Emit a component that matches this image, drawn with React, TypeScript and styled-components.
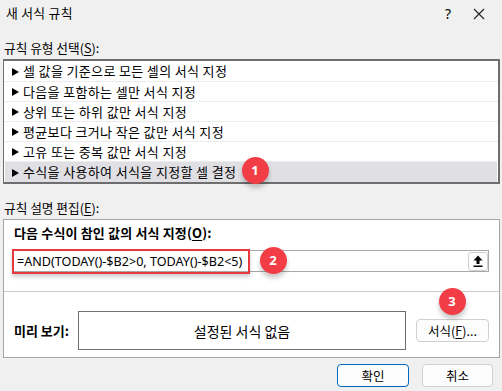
import React from "react";
import styled, { createGlobalStyle } from "styled-components";

const Global = createGlobalStyle`
  html, body { margin: 0; padding: 0; background: #f0f0f0; }
  body { font-family: "Noto Sans CJK KR", "Noto Sans", sans-serif; color: #000; }
`;

const KR = `"Noto Sans CJK KR", "Noto Sans", sans-serif`;

const Dialog = styled.div`
  position: relative;
  width: 502px;
  height: 391px;
  background: #f0f0f0;
  display: flex;
  flex-direction: column;
  overflow: hidden;
  font-family: ${KR};
  font-size: 12px;
`;

const TitleBar = styled.div`
  height: 27px;
  display: flex;
  align-items: center;
  padding-left: 6px;
`;

const Title = styled.div`
  flex: 1;
  font-size: 12.8px;
  line-height: 16px;
  letter-spacing: 0.3px;
  margin-top: -1px;
`;

const TitleIcon = styled.div<{ $w: number }>`
  width: ${(p) => p.$w}px;
  display: flex;
  align-items: center;
  justify-content: center;
  font-family: "Noto Sans", sans-serif;
  font-size: 14px;
`;

const SectionLabel = styled.div<{ $top: number }>`
  margin: ${(p) => p.$top}px 0 3px 4px;
  line-height: 16px;
  font-size: 12.7px;
  u { text-decoration: underline; text-underline-offset: 2px; }
`;

const RuleList = styled.div`
  margin: 0 2px 0 3px;
  height: 125px;
  box-sizing: border-box;
  border: 2px solid #6e6e6e;
  border-left-width: 1.5px;
  background: #fff;
  display: flex;
  flex-direction: column;
`;

const RuleRow = styled.div<{ $selected?: boolean; $first?: boolean }>`
  height: ${(p) => (p.$first ? 20 : p.$selected ? 20 : 19)}px;
  border-top: ${(p) => (p.$first ? "none" : "1px solid #ececec")};
  display: flex;
  align-items: center;
  padding-left: ${(p) => (p.$selected ? 6.5 : 7.5)}px;
  margin: ${(p) => (p.$selected ? "0 1px" : "0")};
  background: ${(p) => (p.$selected ? "#dfdfe4" : "#fff")};
  font-size: 13px;
  line-height: 16px;
  letter-spacing: 0.35px;
  white-space: nowrap;
`;

const Arrow = styled.span`
  width: 0;
  height: 0;
  border-left: 7.5px solid #000;
  border-top: 4px solid transparent;
  border-bottom: 4px solid transparent;
  margin-right: 4.5px;
  margin-top: 1px;
`;

const DescBox = styled.div`
  margin: 0 2px 0 3px;
  height: 139px;
  box-sizing: border-box;
  border: 1px solid #a5a5a5;
  background: #fff;
  display: flex;
  flex-direction: column;
`;

const Heading = styled.div`
  margin: 5px 0 0 10px;
  line-height: 16px;
  font-weight: 700;
  font-size: 13px;
  letter-spacing: 0.15px;
  u { text-decoration: underline; text-underline-offset: 2px; }
`;

const InputWrap = styled.div`
  position: relative;
  margin: 9px 10px 0 8px;
`;

const Input = styled.div`
  height: 22px;
  box-sizing: border-box;
  border: 1px solid #a8a8a8;
  display: flex;
  align-items: center;
  justify-content: space-between;
  padding-left: 4px;
  font-family: "Noto Sans", "Open Sans", sans-serif;
  font-size: 12.6px;
  white-space: nowrap;
`;

const UploadButton = styled.div`
  width: 20px;
  height: 19px;
  box-sizing: border-box;
  border: 1px solid #cfcfcf;
  border-radius: 3px;
  background: #fdfdfd;
  display: flex;
  align-items: center;
  justify-content: center;
`;

const Highlight = styled.div`
  position: absolute;
  left: 0;
  top: -1px;
  width: 238px;
  height: 25px;
  box-sizing: border-box;
  border: 2.5px solid #e8393e;
  box-shadow: 0 3px 4px rgba(0, 0, 0, 0.18);
  pointer-events: none;
`;

const Divider = styled.div`
  margin-top: 19px;
  height: 1px;
  background: #c9c9c9;
`;

const PreviewRow = styled.div`
  display: flex;
  align-items: center;
  margin: 19px 10px 0 10px;
`;

const PreviewLabel = styled.div`
  width: 64px;
  font-weight: 700;
  font-size: 13px;
  line-height: 16px;
`;

const PreviewBox = styled.div`
  width: 328px;
  height: 39px;
  box-sizing: border-box;
  border: 1.5px solid #6e6e6e;
  display: flex;
  align-items: center;
  justify-content: center;
  font-size: 14px;
`;

const Button = styled.button<{ $primary?: boolean; $w: number }>`
  width: ${(p) => p.$w}px;
  height: 23px;
  box-sizing: border-box;
  border: 1px solid ${(p) => (p.$primary ? "#0067c0" : "#d0d0d0")};
  border-radius: 4px;
  background: #fdfdfd;
  font-family: ${KR};
  font-size: 12.5px;
  color: #000;
  padding: 0;
  display: flex;
  align-items: center;
  justify-content: center;
`;

const FormatButton = styled(Button)`
  margin-left: 10px;
  u { text-decoration: underline; text-underline-offset: 2px; }
`;

const Footer = styled.div`
  display: flex;
  justify-content: flex-end;
  gap: 13px;
  margin: 6px 9px 0 0;
`;

const Badge = styled.div<{ $x: number; $y: number }>`
  position: absolute;
  left: ${(p) => p.$x - 13.5}px;
  top: ${(p) => p.$y - 13.5}px;
  width: 27px;
  height: 27px;
  border-radius: 50%;
  background: #f23d46;
  color: #fff;
  font-family: "Noto Sans", sans-serif;
  font-weight: 700;
  font-size: 13px;
  display: flex;
  align-items: center;
  justify-content: center;
  box-shadow: 0 4px 5px rgba(0, 0, 0, 0.22);
`;

const rules = [
  "셀 값을 기준으로 모든 셀의 서식 지정",
  "다음을 포함하는 셀만 서식 지정",
  "상위 또는 하위 값만 서식 지정",
  "평균보다 크거나 작은 값만 서식 지정",
  "고유 또는 중복 값만 서식 지정",
  "수식을 사용하여 서식을 지정할 셀 결정",
];

export default function App() {
  return (
    <Dialog>
      <Global />
      <TitleBar>
        <Title>새 서식 규칙</Title>
        <TitleIcon $w={16}>?</TitleIcon>
        <TitleIcon $w={46}>
          <svg width="12" height="12" viewBox="0 0 12 12">
            <path d="M1 1 L11 11 M11 1 L1 11" stroke="#222" strokeWidth="1.1" />
          </svg>
        </TitleIcon>
      </TitleBar>
      <SectionLabel $top={13}>
        규칙 유형 선택(<u>S</u>):
      </SectionLabel>
      <RuleList>
        {rules.map((r, i) => (
          <RuleRow key={r} $first={i === 0} $selected={i === rules.length - 1}>
            <Arrow />
            {r}
          </RuleRow>
        ))}
      </RuleList>
      <SectionLabel $top={16}>
        규칙 설명 편집(<u>E</u>):
      </SectionLabel>
      <DescBox>
        <Heading>
          다음 수식이 참인 값의 서식 지정(<u>O</u>):
        </Heading>
        <InputWrap>
          <Input>
            <span>=AND(TODAY()-$B2&gt;0, TODAY()-$B2&lt;5)</span>
            <UploadButton>
              <svg width="10" height="12" viewBox="0 0 10 12">
                <path d="M5 0.5 L9.5 5.5 H6.5 V9 H3.5 V5.5 H0.5 Z" fill="#000" />
                <rect x="0.5" y="10.5" width="9" height="1.5" fill="#000" />
              </svg>
            </UploadButton>
          </Input>
          <Highlight />
        </InputWrap>
        <Divider />
        <PreviewRow>
          <PreviewLabel>미리 보기:</PreviewLabel>
          <PreviewBox>설정된 서식 없음</PreviewBox>
          <FormatButton $w={73}>
            서식(<u>F</u>)...
          </FormatButton>
        </PreviewRow>
      </DescBox>
      <Footer>
        <Button $primary $w={72}>확인</Button>
        <Button $w={71}>취소</Button>
      </Footer>
      <Badge $x={255} $y={170}>1</Badge>
      <Badge $x={273} $y={260}>2</Badge>
      <Badge $x={452} $y={301}>3</Badge>
    </Dialog>
  );
}
